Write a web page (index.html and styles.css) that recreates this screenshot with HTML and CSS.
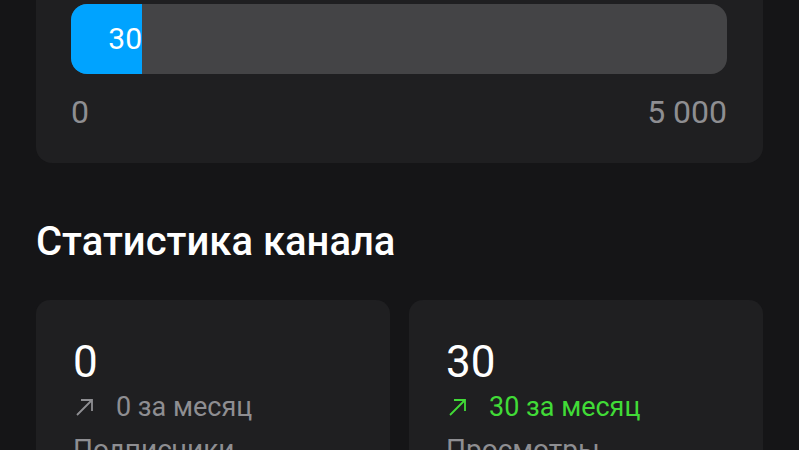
FILE: index.html
```html
<!DOCTYPE html>
<html lang="ru">
<head>
<meta charset="utf-8">
<link rel="stylesheet" href="styles.css">
</head>
<body>
<div class="page">
  <section class="goal-card">
    <div class="bar">
      <div class="bar-fill" style="width: 71px;"><span>30</span></div>
    </div>
    <div class="bar-scale">
      <span>0</span>
      <span>5 000</span>
    </div>
  </section>

  <h2 class="section-title">Статистика канала</h2>

  <div class="stats">
    <div class="stat-card">
      <div class="stat-value">0</div>
      <div class="stat-delta">
        <svg class="arrow" viewBox="0 0 19 19" width="19" height="19"><path d="M2 17 L17 2 M6 2 H17 V13" fill="none" stroke="currentColor" stroke-width="1.8"/></svg>
        <span>0 за месяц</span>
      </div>
      <div class="stat-label">Подписчики</div>
    </div>
    <div class="stat-card">
      <div class="stat-value">30</div>
      <div class="stat-delta up">
        <svg class="arrow" viewBox="0 0 19 19" width="19" height="19"><path d="M2 17 L17 2 M6 2 H17 V13" fill="none" stroke="currentColor" stroke-width="1.8"/></svg>
        <span>30 за месяц</span>
      </div>
      <div class="stat-label">Просмотры</div>
    </div>
  </div>
</div>
</body>
</html>
```

FILE: styles.css
```css
* { box-sizing: border-box; }
html, body {
  margin: 0;
  padding: 0;
  background: #151517;
  font-family: Roboto, "Noto Sans", sans-serif;
  color: #ffffff;
  overflow: hidden;
}
.page {
  padding: 0 36px;
}
.goal-card {
  margin-top: -30px;
  background: #1f1f21;
  border-radius: 16px;
  padding: 34px 36px 32px 35px;
}
.bar {
  height: 70px;
  background: #444446;
  border-radius: 16px;
  overflow: hidden;
  display: flex;
}
.bar-fill {
  background: #00a3ff;
  height: 100%;
  display: flex;
  align-items: center;
  justify-content: flex-end;
  font-size: 30px;
  line-height: 36px;
  color: #ffffff;
}
.bar-scale {
  margin-top: 19px;
  display: flex;
  justify-content: space-between;
  font-size: 32px;
  line-height: 38px;
  color: #8e8e92;
}
.section-title {
  margin: 55px 0 0 0;
  font-size: 40px;
  line-height: 48px;
  font-weight: 500;
  letter-spacing: 0;
}
.stats {
  margin-top: 34px;
  display: grid;
  grid-template-columns: 1fr 1fr;
  gap: 19px;
}
.stat-card {
  background: #1f1f21;
  border-radius: 14px;
  padding: 36px 37px 30px;
  min-height: 200px;
}
.stat-value {
  font-size: 44px;
  line-height: 52px;
}
.stat-delta {
  margin-top: 3px;
  display: flex;
  align-items: center;
  gap: 22px;
  font-size: 27px;
  line-height: 32px;
  color: #8e8e92;
}
.stat-delta .arrow {
  margin-left: 2px;
  flex: none;
}
.stat-delta.up {
  color: #41db37;
}
.stat-label {
  margin-top: 10px;
  font-size: 28px;
  line-height: 34px;
  color: #8e8e92;
}
```
